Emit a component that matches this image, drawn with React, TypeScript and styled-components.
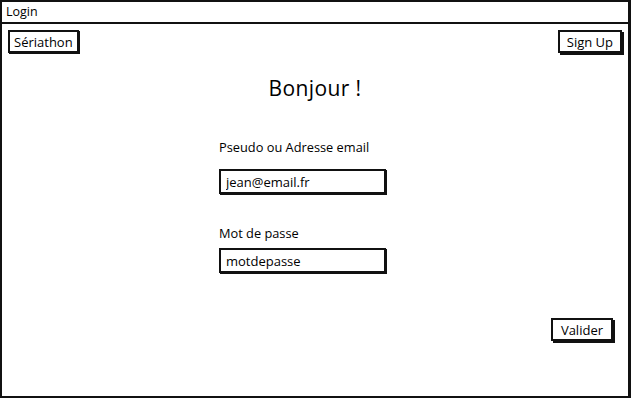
import styled, { createGlobalStyle } from "styled-components";

const GlobalStyle = createGlobalStyle`
  html, body {
    margin: 0;
    padding: 0;
    background: #ffffff;
  }
  body {
    font-family: "Open Sans", "Lato", sans-serif;
    color: #000000;
  }
`;

const Frame = styled.div`
  box-sizing: border-box;
  width: 631px;
  height: 398px;
  border: 2px solid #111;
  border-right-width: 3px;
  display: flex;
  flex-direction: column;
  background: #fff;
`;

const TitleBar = styled.div`
  height: 20px;
  border-bottom: 2px solid #111;
  padding-left: 4px;
  font-size: 12.5px;
  line-height: 20px;
`;

const TopBar = styled.div`
  display: flex;
  justify-content: space-between;
  align-items: flex-start;
  margin-top: 6px;
  padding: 0 6px 0 6px;
`;

const SketchButton = styled.button<{ $shadow?: boolean; $pad?: number }>`
  box-sizing: border-box;
  height: 23px;
  padding: 0 ${(p) => p.$pad ?? 7}px;
  border: 2px solid #111;
  background: #fff;
  font-family: inherit;
  font-size: 13px;
  line-height: 18px;
  color: #000;
  box-shadow: ${(p) => (p.$shadow ? "2px 2px 0 #111" : "1px 1px 0 #111")};
  cursor: pointer;
`;

const Heading = styled.h1`
  margin: 22px 0 0;
  text-align: center;
  font-size: 21px;
  line-height: 26px;
  font-weight: 400;
  letter-spacing: 0.4px;
`;

const Form = styled.div`
  display: flex;
  flex-direction: column;
  width: 167px;
  margin: 38px 0 0 217px;
`;

const Label = styled.label<{ $gap: number; $top?: number }>`
  font-size: 12.8px;
  line-height: 16px;
  margin-top: ${(p) => p.$top ?? 0}px;
  margin-bottom: ${(p) => p.$gap}px;
`;

const Input = styled.input`
  box-sizing: border-box;
  width: 167px;
  height: 25px;
  padding: 0 5px;
  border: 2px solid #111;
  box-shadow: 1px 1px 0 #111;
  font-family: inherit;
  font-size: 13px;
  color: #000;
  outline: none;
`;

const Footer = styled.div`
  display: flex;
  justify-content: flex-end;
  margin-top: 45px;
  padding-right: 15px;
`;

export default function App() {
  return (
    <>
      <GlobalStyle />
      <Frame>
        <TitleBar>Login</TitleBar>
        <TopBar>
          <SketchButton $pad={4}>Sériathon</SketchButton>
          <SketchButton $shadow>Sign Up</SketchButton>
        </TopBar>
        <Heading>Bonjour !</Heading>
        <Form>
          <Label $gap={14}>Pseudo ou Adresse email</Label>
          <Input defaultValue="jean@email.fr" />
          <Label $top={31} $gap={7}>
            Mot de passe
          </Label>
          <Input defaultValue="motdepasse" />
        </Form>
        <Footer>
          <SketchButton $shadow $pad={8}>Valider</SketchButton>
        </Footer>
      </Frame>
    </>
  );
}
